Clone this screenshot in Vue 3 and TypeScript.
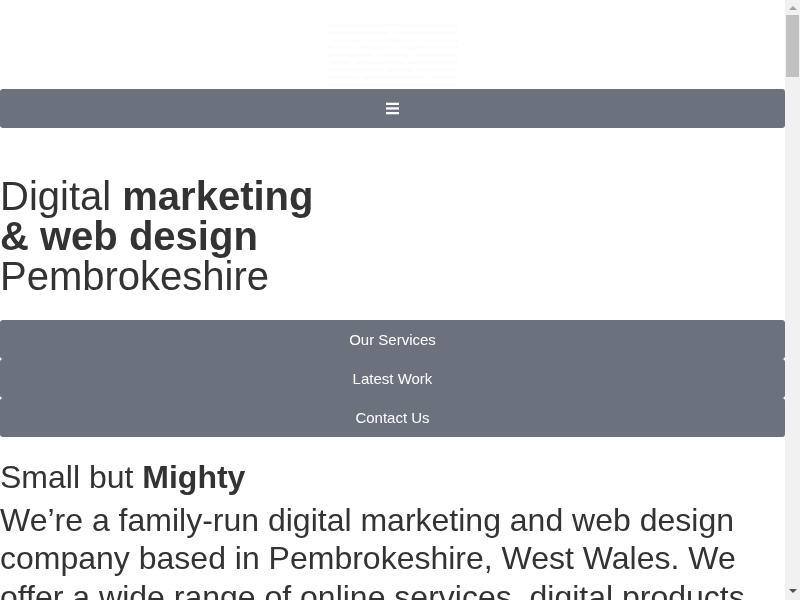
<script setup lang="ts">
const links = ['Our Services', 'Latest Work', 'Contact Us']

// faint logo rows, the source logo is almost white on white
const logoRows = [
  [[0, 130]],
  [[0, 60], [66, 64]],
  [[4, 30], [40, 50], [96, 34]],
  [[0, 24], [30, 34], [72, 58]],
  [[0, 44], [50, 30], [88, 42]],
  [[2, 20], [28, 46], [80, 50]],
  [[0, 54], [60, 24], [90, 40]],
  [[0, 30], [36, 60], [102, 28]],
  [[0, 130]],
]
</script>

<template>
  <div class="window">
    <div class="page">
      <header class="logo">
        <svg width="132" height="64" viewBox="0 0 132 64" aria-hidden="true">
          <g v-for="(row, i) in logoRows" :key="i">
            <rect
              v-for="(seg, j) in row"
              :key="j"
              :x="seg[0] + 1"
              :y="i * 7.4 + 1"
              :width="seg[1]"
              height="3"
              fill="#fcfcfc"
            />
          </g>
        </svg>
      </header>

      <nav class="bar">
        <svg width="13" height="13" viewBox="0 0 13 13" aria-hidden="true">
          <rect y="0.7" width="13" height="2.3" fill="#fff" />
          <rect y="5.3" width="13" height="2.3" fill="#fff" />
          <rect y="10" width="13" height="2.3" fill="#fff" />
        </svg>
      </nav>

      <h1>Digital <b>marketing<br>&amp; web design</b><br>Pembrokeshire</h1>

      <div class="menu">
        <a v-for="link in links" :key="link" class="item" href="#">{{ link }}</a>
      </div>

      <h2>Small but <b>Mighty</b></h2>
      <p class="lead">We’re a family-run digital marketing and web design company based in Pembrokeshire, West Wales. We offer a wide range of online services, digital products and more.</p>
    </div>

    <div class="scrollbar">
      <span class="arrow up"></span>
      <span class="thumb"></span>
      <span class="arrow down"></span>
    </div>
  </div>
</template>

<style scoped>
.window {
  height: 600px;
  display: flex;
  overflow: hidden;
}
.page {
  flex: 1;
  min-width: 0;
  color: #333;
  font-family: "Liberation Sans", Arial, sans-serif;
  will-change: transform;
}
.logo {
  height: 89px;
  display: flex;
  justify-content: center;
  padding-top: 23px;
  box-sizing: border-box;
}
.bar {
  height: 39px;
  display: flex;
  align-items: center;
  justify-content: center;
  background: #6c727d;
  border-radius: 3px;
}
h1 {
  margin: 48px 0 24px;
  font-size: 40px;
  line-height: 40px;
  font-weight: 400;
}
.menu {
  display: flex;
  flex-direction: column;
}
.item {
  height: 39px;
  display: flex;
  align-items: center;
  justify-content: center;
  background: #6c727d;
  border-radius: 3px;
  color: #fff;
  font-size: 15px;
  text-decoration: none;
}
h2 {
  margin: 22px 0 0;
  font-size: 32px;
  line-height: 36px;
  font-weight: 400;
}
.lead {
  margin: 6px 0 0;
  font-size: 32px;
  line-height: 38.4px;
}
.scrollbar {
  width: 15px;
  flex: none;
  display: flex;
  flex-direction: column;
  align-items: center;
  background: #f1f1f1;
}
.thumb {
  width: 13px;
  height: 62px;
  margin-top: 5px;
  background: #c1c1c1;
}
.arrow {
  width: 0;
  height: 0;
  border-left: 4px solid transparent;
  border-right: 4px solid transparent;
}
.arrow.up {
  margin-top: 6px;
  border-bottom: 4px solid #a3a3a3;
}
.arrow.down {
  margin-top: auto;
  margin-bottom: 7px;
  border-top: 4px solid #505050;
}
</style>

<style>
html, body {
  margin: 0;
  background: #fff;
}
</style>
